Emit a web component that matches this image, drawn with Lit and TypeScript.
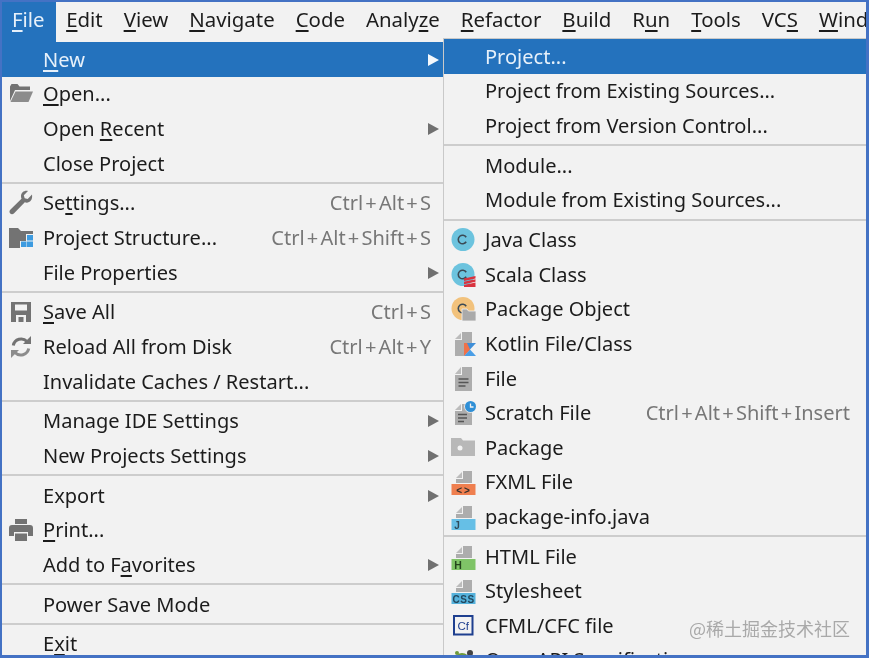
import { LitElement, html, css, svg, nothing } from "lit";
import { customElement } from "lit/decorators.js";

const G = "#737373";
const fileTop = svg`<path d="M5 8 11 2v6z" fill="#bcbcbc"/><path d="M12 1h9v12H5V9h7z" fill="#adadad"/>`;
const band = (color: string, label: string, fg: string, x: number, size: number, weight = 700, spacing = 0) =>
  svg`${fileTop}<rect x="0.500" y="14" width="24" height="11" fill="${color}"/><text x="${x}" y="23.500" text-anchor="middle" font-family="Liberation Sans, sans-serif" font-weight="${weight}" font-size="${size}" letter-spacing="${spacing}" fill="${fg}">${label}</text>`;
const circle = (color: string) =>
  svg`<circle cx="12" cy="11.500" r="11.500" fill="${color}"/><path d="M15.200 9.200a4.300 4.300 0 1 0 0 4.600" fill="none" stroke="#3b4a55" stroke-width="1.600"/>`;

const ICONS: Record<string, unknown> = {
  open: svg`<path d="M1 4.500 2.500 2h6l2 2.500H21V8H6L1 19z" fill="${G}"/><path d="M6.500 9.500H24L19.500 20H1.500z" fill="#8c8c8c"/>`,
  wrench: svg`<path d="M23 3.500 18.700 8l-3-.8-.9-3L19 0c-3.400-.9-7 1.300-7 5.200 0 1 .2 1.800.5 2.500L1.500 18.500c-1.300 1.300-1.300 2.900-.3 3.900s2.700 1 3.900-.2L15.800 11.300c3.800 1.400 8.200-1.500 7.200-7.800z" fill="${G}"/>`,
  structure: svg`<path d="M0 2h9l3 3h12v3H17v7h-6v7H0z" fill="${G}"/><path d="M18 9h6v5.500h-6zM12 15.500h5.500V21H12zM18 15.500h6V21h-6z" fill="#3d9be0"/>`,
  save: svg`<path d="M2 2h20v20H2z" fill="${G}"/><path d="M6 4.500h12v6H6z" fill="#f2f2f2"/><path d="M7 15h10v7H7z" fill="#f2f2f2"/><path d="M9.500 17h5v5h-5z" fill="${G}"/>`,
  reload: svg`<path d="M4.300 10.500A8 8 0 0 1 18 6.500" fill="none" stroke="${G}" stroke-width="3"/><path d="M14 9h8V1z" fill="${G}"/><path d="M19.700 13.500A8 8 0 0 1 6 17.500" fill="none" stroke="#8c8c8c" stroke-width="3"/><path d="M10 15H2v8z" fill="#8c8c8c"/>`,
  print: svg`<path d="M6 1h12v5H6z" fill="${G}"/><path d="M0 10a3 3 0 0 1 3-3h18a3 3 0 0 1 3 3v8h-5v-4H5v4H0z" fill="${G}"/><path d="M6 15.500h12V23H6z" fill="${G}"/>`,
  java: circle("#6cc3de"),
  scala: svg`${circle("#6cc3de")}<path d="M13 15.500 24.500 13v2.500L13 18zM13 18.800 24.500 16.300v2.500L13 21.300zM13 22.100 24.500 19.600V24H13z" fill="#d9333f"/>`,
  pkgobj: svg`${circle("#f2c27c")}<path d="M11 12h5l1.500 2H25v10H11z" fill="#aaa" stroke="#f2f2f2" stroke-width=".8"/>`,
  kotlin: svg`<path d="M4 7 10 1v6z" fill="#bcbcbc"/><path d="M11 0h10v11H13v13H4V8h7z" fill="#adadad"/><path d="M13 11h12L13 24z" fill="#3f8fd8"/><path d="M13 24l6-6.500 6 6.500z" fill="#4a9ee6"/><path d="M13 11v13l6-6.500-3-6.500z" fill="#f0724a"/>`,
  file: svg`<path d="M4 7 10 0v7z" fill="#bcbcbc"/><path d="M11 0h10v24H4V8h7z" fill="#adadad"/><path d="M7.500 12h10M7.500 15.500h10M7.500 19h7" stroke="#555" stroke-width="1.500"/>`,
  scratch: svg`<path d="M4 9l6-6v6z" fill="#bcbcbc"/><path d="M11 3h10v21H4V10h7z" fill="#adadad"/><path d="M7 13.500h9M7 17h9M7 20.500h6" stroke="#555" stroke-width="1.500"/><circle cx="19.500" cy="5.500" r="6.300" fill="#f2f2f2"/><circle cx="19.500" cy="5.500" r="5.500" fill="#2f8fd6"/><path d="M19.500 2.500v3.500h3" fill="none" stroke="#f2f2f2" stroke-width="1.300"/>`,
  pkg: svg`<path d="M0 2h10l2 2.500h12V20H0z" fill="#b8b8b8"/><circle cx="9" cy="12" r="2.500" fill="#f2f2f2"/>`,
  fxml: band("#ef7f4f", "<>", "#33302e", 13, 10, 700, 2),
  pinfo: band("#66bfe6", "J", "#2f4b5a", 6, 10),
  html: band("#7fc467", "H", "#24451c", 7, 10.500),
  css: band("#55b2dc", "CSS", "#22485e", 12.700, 10, 700, 0.600),
  cfml: svg`<rect x="3" y="2" width="18.500" height="18.500" fill="#f2f2f2" stroke="#1e3f8f" stroke-width="2"/><text x="12.200" y="15.500" text-anchor="middle" font-family="Liberation Sans, sans-serif" font-size="11.500" fill="#1e3f8f">Cf</text>`,
  openapi: svg`<circle cx="11" cy="13" r="8" fill="#6f9a3a"/><circle cx="19" cy="5" r="3" fill="#444"/><circle cx="6" cy="5" r="2" fill="#6f9a3a"/>`,
};

interface Item { label: string; icon?: string; key?: string; arrow?: boolean; selected?: boolean; }
type Entry = Item | "sep";

const BAR = ["_File", "_Edit", "_View", "_Navigate", "_Code", "Analy_ze", "_Refactor", "_Build", "R_un", "_Tools", "VC_S", "_Window"];

const LEFT: Entry[] = [
  { label: "_New", arrow: true, selected: true },
  { label: "_Open...", icon: "open" },
  { label: "Open _Recent", arrow: true },
  { label: "Close Project" },
  "sep",
  { label: "Se_ttings...", icon: "wrench", key: "Ctrl+Alt+S" },
  { label: "Project Structure...", icon: "structure", key: "Ctrl+Alt+Shift+S" },
  { label: "File Properties", arrow: true },
  "sep",
  { label: "_Save All", icon: "save", key: "Ctrl+S" },
  { label: "Reload All from Disk", icon: "reload", key: "Ctrl+Alt+Y" },
  { label: "Invalidate Caches / Restart..." },
  "sep",
  { label: "Manage IDE Settings", arrow: true },
  { label: "New Projects Settings", arrow: true },
  "sep",
  { label: "Export", arrow: true },
  { label: "_Print...", icon: "print" },
  { label: "Add to F_avorites", arrow: true },
  "sep",
  { label: "Power Save Mode" },
  "sep",
  { label: "E_xit" },
];

const RIGHT: Entry[] = [
  { label: "Project...", selected: true },
  { label: "Project from Existing Sources..." },
  { label: "Project from Version Control..." },
  "sep",
  { label: "Module..." },
  { label: "Module from Existing Sources..." },
  "sep",
  { label: "Java Class", icon: "java" },
  { label: "Scala Class", icon: "scala" },
  { label: "Package Object", icon: "pkgobj" },
  { label: "Kotlin File/Class", icon: "kotlin" },
  { label: "File", icon: "file" },
  { label: "Scratch File", icon: "scratch", key: "Ctrl+Alt+Shift+Insert" },
  { label: "Package", icon: "pkg" },
  { label: "FXML File", icon: "fxml" },
  { label: "package-info.java", icon: "pinfo" },
  "sep",
  { label: "HTML File", icon: "html" },
  { label: "Stylesheet", icon: "css" },
  { label: "CFML/CFC file", icon: "cfml" },
  { label: "OpenAPI Specification", icon: "openapi" },
];

function mnemonic(text: string) {
  const i = text.indexOf("_");
  if (i < 0) return text;
  return html`${text.slice(0, i)}<u>${text[i + 1]}</u>${text.slice(i + 2)}`;
}

function shortcut(key: string) {
  return key.split("+").map((part, i) => (i === 0 ? part : html`<span class="plus">+</span>${part}`));
}

function menu(entries: Entry[]) {
  return entries.map((e) => {
    if (e === "sep") return html`<div class="sep"></div>`;
    return html`<div class="row ${e.selected ? "sel" : ""}">
      <span class="ico">${e.icon ? html`<svg width="24" height="24" viewBox="0 0 24 24">${ICONS[e.icon]}</svg>` : nothing}</span>
      <span class="label">${mnemonic(e.label)}</span>
      ${e.key ? html`<span class="key">${shortcut(e.key)}</span>` : nothing}
      ${e.arrow ? html`<span class="arrow"></span>` : nothing}
    </div>`;
  });
}

@customElement("app-root")
export class AppRoot extends LitElement {
  static styles = css`
    :host {
      display: block;
      width: 869px;
      height: 658px;
    }
    .frame {
      box-sizing: border-box;
      width: 869px;
      height: 658px;
      position: relative;
      overflow: hidden;
      border: solid #4472c4;
      border-width: 2px 3px 3px 2px;
      background: #f2f2f2;
      color: #1c1c1c;
      font-family: "Noto Sans", "Liberation Sans", sans-serif;
      font-size: 20.05px;
      line-height: 34px;
      filter: blur(0.35px);
    }
    u {
      text-decoration-thickness: 2px;
      text-underline-offset: 3px;
    }
    .bar {
      display: flex;
      height: 40px;
      align-items: flex-start;
      overflow: hidden;
      white-space: nowrap;
      margin-left: -1px;
      font-size: 20.4px;
    }
    .top {
      flex: none;
      height: 40px;
      line-height: 35px;
      padding: 0 10.5px;
    }
    .top.on {
      background: #2472bd;
      color: #e6f0fa;
      padding: 0 11px;
    }
    .left {
      width: 441px;
      border-right: 1px solid #c9c9c9;
      height: 620px;
    }
    .sub {
      position: absolute;
      left: 441px;
      top: 36px;
      right: 0;
      border-top: 1px solid #c9c9c9;
      border-left: 1px solid #c9c9c9;
      background: #f2f2f2;
    }
    .row {
      box-sizing: border-box;
      display: flex;
      align-items: center;
      height: 34.6px;
      padding: 1px 12px 0 0;
      white-space: nowrap;
    }
    .sub .row {
      padding-right: 16px;
    }
    .row.sel {
      background: #2472bd;
      color: #e6f0fa;
    }
    .ico {
      flex: none;
      box-sizing: border-box;
      width: 41px;
      padding-right: 3px;
      display: flex;
      justify-content: center;
    }
    .ico svg {
      display: block;
      overflow: visible;
    }
    .label {
      flex: 1;
      min-width: 0;
    }
    .key {
      color: #777;
    }
    .plus {
      margin: 0 2.2px;
    }
    .arrow {
      width: 0;
      height: 0;
      border-left: 11px solid #707070;
      border-top: 6.5px solid transparent;
      border-bottom: 6.5px solid transparent;
      margin-right: -8px;
    }
    .sel .arrow {
      border-left-color: #f4f8fc;
    }
    .sep {
      height: 2px;
      margin: 1.6px 0;
      background: #cdcdcd;
    }
    .mark {
      position: absolute;
      right: 16px;
      bottom: 16px;
      font-family: "Noto Sans CJK SC", "Noto Sans", sans-serif;
      font-size: 18px;
      line-height: 22px;
      color: #a9a9a9;
      white-space: nowrap;
    }
  `;

  render() {
    return html`<div class="frame">
      <div class="bar">
        ${BAR.map((t, i) => html`<span class="top ${i === 0 ? "on" : ""}">${mnemonic(t)}</span>`)}
      </div>
      <div class="left">${menu(LEFT)}</div>
      <div class="sub">${menu(RIGHT)}</div>
      <div class="mark">@稀土掘金技术社区</div>
    </div>`;
  }
}
